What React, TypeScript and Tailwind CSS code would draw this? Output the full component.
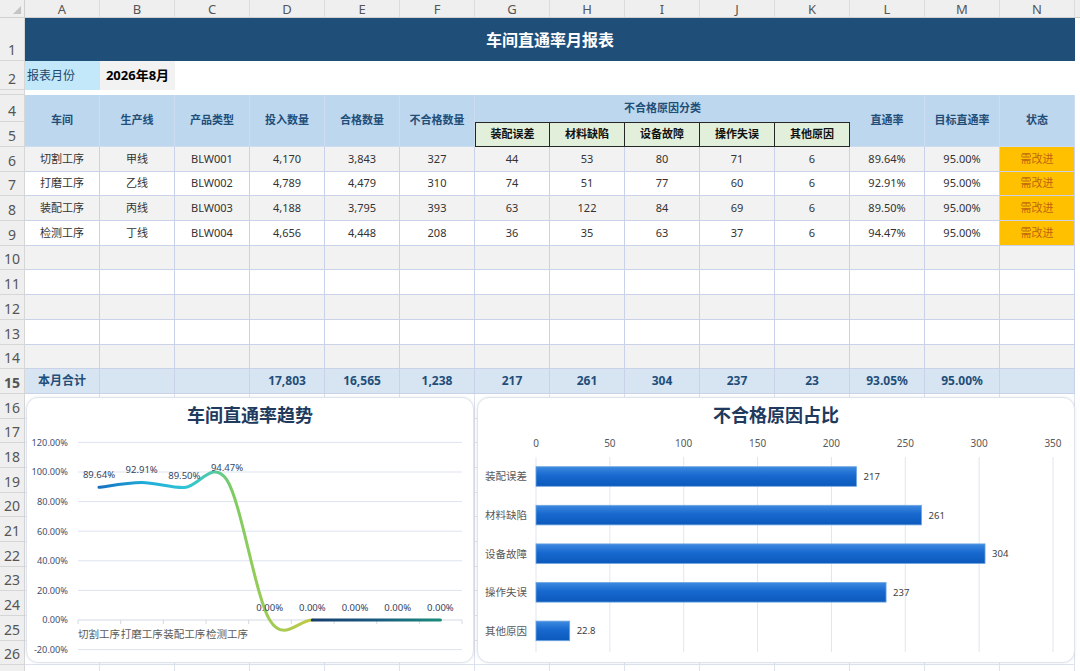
import type { ReactNode } from "react";

const COLS = ["A", "B", "C", "D", "E", "F", "G", "H", "I", "J", "K", "L", "M", "N"];

const DATA = [
  { shop: "切割工序", line: "甲线", type: "BLW001", input: "4,170", pass: "3,843", fail: "327", reasons: ["44", "53", "80", "71", "6"], rate: "89.64%" },
  { shop: "打磨工序", line: "乙线", type: "BLW002", input: "4,789", pass: "4,479", fail: "310", reasons: ["74", "51", "77", "60", "6"], rate: "92.91%" },
  { shop: "装配工序", line: "丙线", type: "BLW003", input: "4,188", pass: "3,795", fail: "393", reasons: ["63", "122", "84", "69", "6"], rate: "89.50%" },
  { shop: "检测工序", line: "丁线", type: "BLW004", input: "4,656", pass: "4,448", fail: "208", reasons: ["36", "35", "63", "37", "6"], rate: "94.47%" },
];

const TOTALS = ["本月合计", "", "", "17,803", "16,565", "1,238", "217", "261", "304", "237", "23", "93.05%", "95.00%", ""];

const REASON_HEADERS = ["装配误差", "材料缺陷", "设备故障", "操作失误", "其他原因"];

function RowHead({ n, className = "" }: { n?: string; className?: string }) {
  return (
    <div
      className={`flex w-[25px] shrink-0 items-end justify-center overflow-hidden border-r border-b border-[#d6d6d6] bg-[#efefef] pb-[3px] text-[14px] leading-none text-[#555] ${className}`}
    >
      {n}
    </div>
  );
}

function Cell({ children, className = "" }: { children?: ReactNode; className?: string }) {
  return (
    <div
      className={`flex w-[75px] shrink-0 items-center justify-center border-r border-b border-[#c9d2e8] ${className}`}
    >
      {children}
    </div>
  );
}

function HeadCell({ children }: { children: ReactNode }) {
  return (
    <div className="flex h-full w-[75px] shrink-0 items-center justify-center border-r border-b border-[#cddcef] bg-[#bdd7ee] text-[11px] font-bold text-[#1f4e79]">
      {children}
    </div>
  );
}

type Pt = { x: number; y: number };

const smoothPath = (pts: Pt[], from: number, to: number) => {
  let d = `M${pts[from].x},${pts[from].y}`;
  for (let i = from; i < to; i++) {
    const p0 = pts[Math.max(i - 1, 0)];
    const p1 = pts[i];
    const p2 = pts[i + 1];
    const p3 = pts[Math.min(i + 2, pts.length - 1)];
    const c1x = p1.x + (p2.x - p0.x) / 6;
    const c1y = p1.y + (p2.y - p0.y) / 6;
    const c2x = p2.x - (p3.x - p1.x) / 6;
    const c2y = p2.y - (p3.y - p1.y) / 6;
    d += ` C${c1x},${c1y} ${c2x},${c2y} ${p2.x},${p2.y}`;
  }
  return d;
};

function TrendChart() {
  const values = [89.64, 92.91, 89.5, 94.47, 0, 0, 0, 0, 0];
  const pts = values.map((v, i) => ({ x: 72 + i * 42.67, y: 186 - v * 1.48 }));
  const ticks = [120, 100, 80, 60, 40, 20, 0, -20];
  const cats = ["切割工序", "打磨工序", "装配工序", "检测工序"];

  return (
    <div className="flex h-[266px] w-[448px] shrink-0 flex-col rounded-[12px] border border-[#dfe4ec] bg-white shadow-[0_0_3px_rgba(60,80,120,0.12)]">
      <div className="flex h-[36px] shrink-0 items-center justify-center text-[18px] font-bold text-[#203a5e]">
        车间直通率趋势
      </div>
      <svg width="446" height="228" viewBox="0 0 446 228">
        <defs>
          <linearGradient id="trendA" gradientUnits="userSpaceOnUse" x1="72" y1="0" x2="286" y2="0">
            <stop offset="0" stopColor="#1670c0" />
            <stop offset="0.2" stopColor="#1fa8d8" />
            <stop offset="0.4" stopColor="#2ec4d6" />
            <stop offset="0.53" stopColor="#4fc9a8" />
            <stop offset="0.62" stopColor="#7dcc62" />
            <stop offset="0.8" stopColor="#9fcc55" />
            <stop offset="1" stopColor="#c3c845" />
          </linearGradient>
          <linearGradient id="trendB" gradientUnits="userSpaceOnUse" x1="286" y1="0" x2="414" y2="0">
            <stop offset="0" stopColor="#173f6e" />
            <stop offset="0.5" stopColor="#1a5a80" />
            <stop offset="1" stopColor="#1a8c7a" />
          </linearGradient>
        </defs>
        {ticks.map((t) => {
          const y = 186 - t * 1.48;
          return (
            <g key={t}>
              <line x1="51" x2="435" y1={y} y2={y} stroke={t === 0 ? "#d3d9e4" : "#dde3ee"} strokeWidth="1" />
              <text x="41" y={y + 3.3} textAnchor="end" fontSize="9.2" fill="#3f5070">
                {t.toFixed(2)}%
              </text>
            </g>
          );
        })}
        {Array.from({ length: 10 }).map((_, k) => (
          <line key={k} x1={51 + k * 42.67} x2={51 + k * 42.67} y1="186" y2="190" stroke="#d3d9e4" />
        ))}
        <path d={smoothPath(pts, 0, 5)} fill="none" stroke="url(#trendA)" strokeWidth="3" strokeLinecap="round" />
        <path d={smoothPath(pts, 5, 8)} fill="none" stroke="url(#trendB)" strokeWidth="3.2" strokeLinecap="round" />
        {pts.map((p, i) => (
          <text key={i} x={p.x} y={p.y - 9} textAnchor="middle" fontSize="9.5" fill="#34445f">
            {values[i].toFixed(2)}%
          </text>
        ))}
        {cats.map((c, i) => (
          <text key={c} x={pts[i].x} y="204" textAnchor="middle" fontSize="10.5" fill="#595959">
            {c}
          </text>
        ))}
      </svg>
    </div>
  );
}

function ReasonChart() {
  const reasons = [
    { name: "装配误差", v: 217, label: "217" },
    { name: "材料缺陷", v: 261, label: "261" },
    { name: "设备故障", v: 304, label: "304" },
    { name: "操作失误", v: 237, label: "237" },
    { name: "其他原因", v: 22.8, label: "22.8" },
  ];
  const x0 = 58;
  const scale = 1.4771;

  return (
    <div className="flex h-[266px] w-[598px] shrink-0 flex-col rounded-[12px] border border-[#dfe4ec] bg-white shadow-[0_0_3px_rgba(60,80,120,0.12)]">
      <div className="flex h-[36px] shrink-0 items-center justify-center text-[18px] font-bold text-[#203a5e]">
        不合格原因占比
      </div>
      <svg width="596" height="228" viewBox="0 0 596 228">
        <defs>
          <linearGradient id="barFill" x1="0" y1="0" x2="0" y2="1">
            <stop offset="0" stopColor="#3d8ae0" />
            <stop offset="0.45" stopColor="#1768cf" />
            <stop offset="1" stopColor="#0c59bb" />
          </linearGradient>
        </defs>
        {Array.from({ length: 8 }).map((_, k) => {
          const x = x0 + k * 50 * scale;
          return (
            <g key={k}>
              <line x1={x} x2={x} y1="23" y2="218" stroke="#e0e5ee" strokeWidth="1" />
              <text x={x} y="12.5" textAnchor="middle" fontSize="10" fill="#595959">
                {k * 50}
              </text>
            </g>
          );
        })}
        {reasons.map((r, i) => {
          const cy = 42.5 + i * 38.6;
          const w = r.v * scale;
          return (
            <g key={r.name}>
              <text x="49" y={cy + 3.8} textAnchor="end" fontSize="10.5" fill="#595959">
                {r.name}
              </text>
              <rect x={x0} y={cy - 9.8} width={w} height="19.6" fill="url(#barFill)" stroke="#6ea6e2" strokeWidth="0.8" />
              <text x={x0 + w + 7} y={cy + 3.4} fontSize="9.5" fill="#404040">
                {r.label}
              </text>
            </g>
          );
        })}
      </svg>
    </div>
  );
}

export default function App() {
  return (
    <div className="flex h-[671px] w-[1080px] flex-col overflow-hidden bg-white font-['Noto_Sans','Noto_Sans_CJK_SC',sans-serif]">
      {/* column letters */}
      <div className="flex h-[18px] shrink-0 border-b border-[#cfcfcf] bg-[#efefef]">
        <div className="flex w-[25px] shrink-0 items-end justify-end border-r border-[#d0d0d0] p-[3px]">
          <svg width="8" height="8" viewBox="0 0 8 8">
            <polygon points="8,0 8,8 0,8" fill="#c4c4c4" />
          </svg>
        </div>
        {COLS.map((c) => (
          <div
            key={c}
            className="w-[75px] shrink-0 border-r border-[#dcdcdc] text-center text-[13px] leading-[18px] text-[#555]"
          >
            {c}
          </div>
        ))}
        <div className="flex-1" />
      </div>

      {/* row 1: title */}
      <div className="flex h-[43px] shrink-0">
        <RowHead n="1" />
        <div className="flex w-[1050px] shrink-0 items-center justify-center bg-[#1f4e79] text-[16px] font-bold text-white">
          车间直通率月报表
        </div>
      </div>

      {/* row 2: month */}
      <div className="flex h-[29px] shrink-0">
        <RowHead n="2" />
        <div className="flex w-[75px] shrink-0 items-center bg-[#c2e8f9] pl-[2px] text-[12px] text-[#24466b]">
          报表月份
        </div>
        <div className="flex w-[75px] shrink-0 items-center justify-center bg-[#f2f2f2] text-[13px] font-bold text-black">
          2026年8月
        </div>
      </div>

      {/* row 3 */}
      <div className="flex h-[5px] shrink-0">
        <RowHead />
      </div>

      {/* rows 4-5: header */}
      <div className="flex h-[52px] shrink-0">
        <div className="flex w-[25px] shrink-0 flex-col">
          <RowHead n="4" className="h-[27px]" />
          <RowHead n="5" className="h-[25px]" />
        </div>
        <HeadCell>车间</HeadCell>
        <HeadCell>生产线</HeadCell>
        <HeadCell>产品类型</HeadCell>
        <HeadCell>投入数量</HeadCell>
        <HeadCell>合格数量</HeadCell>
        <HeadCell>不合格数量</HeadCell>
        <div className="flex w-[375px] shrink-0 flex-col bg-[#bdd7ee]">
          <div className="flex h-[27px] items-center justify-center text-[11px] font-bold text-[#1f4e79]">
            不合格原因分类
          </div>
          <div className="flex h-[25px]">
            {REASON_HEADERS.map((h, i) => (
              <div
                key={h}
                className={`flex w-[75px] shrink-0 items-center justify-center border-t border-r border-b border-[#262626] bg-[#e2efda] text-[11px] font-bold text-[#111] ${
                  i === 0 ? "border-l" : ""
                }`}
              >
                {h}
              </div>
            ))}
          </div>
        </div>
        <HeadCell>直通率</HeadCell>
        <HeadCell>目标直通率</HeadCell>
        <HeadCell>状态</HeadCell>
      </div>

      {/* rows 6-9: data */}
      {DATA.map((r, i) => (
        <div key={r.type} className="flex h-[24.7px] shrink-0 text-[11px] text-[#333]">
          <RowHead n={String(6 + i)} />
          {[r.shop, r.line, r.type, r.input, r.pass, r.fail, ...r.reasons, r.rate, "95.00%"].map((v, j) => (
            <Cell key={j} className={i % 2 === 0 ? "bg-[#f2f2f2]" : "bg-white"}>
              {v}
            </Cell>
          ))}
          <Cell className="bg-[#ffc000] text-[#c0650f]">需改进</Cell>
        </div>
      ))}

      {/* rows 10-14: empty */}
      {[10, 11, 12, 13, 14].map((n) => (
        <div key={n} className="flex h-[24.7px] shrink-0">
          <RowHead n={String(n)} />
          {COLS.map((c) => (
            <Cell key={c} className={n % 2 === 0 ? "bg-[#f2f2f2]" : "bg-white"} />
          ))}
        </div>
      ))}

      {/* row 15: totals */}
      <div className="flex h-[24.7px] shrink-0 text-[12px] font-bold text-[#1f4e79]">
        <RowHead n="15" />
        {TOTALS.map((v, j) => (
          <Cell key={j} className="bg-[#d7e4f1]">
            {v}
          </Cell>
        ))}
      </div>

      {/* rows 16+: charts */}
      <div className="flex min-h-0 flex-1 overflow-hidden">
        <div className="flex w-[25px] shrink-0 flex-col">
          {Array.from({ length: 12 }).map((_, k) => (
            <RowHead key={k} n={k < 11 ? String(16 + k) : undefined} className="h-[24.7px]" />
          ))}
        </div>
        <div className="grid flex-1">
          <div className="col-start-1 row-start-1 flex flex-col">
            {Array.from({ length: 12 }).map((_, k) => (
              <div key={k} className="flex h-[24.7px] shrink-0">
                {COLS.map((c) => (
                  <div key={c} className="w-[75px] shrink-0 border-r border-b border-[#dde3ec]" />
                ))}
              </div>
            ))}
          </div>
          <div className="col-start-1 row-start-1 flex items-start gap-[3px] pt-[3px] pl-[1px]">
            <TrendChart />
            <ReasonChart />
          </div>
        </div>
      </div>
    </div>
  );
}
